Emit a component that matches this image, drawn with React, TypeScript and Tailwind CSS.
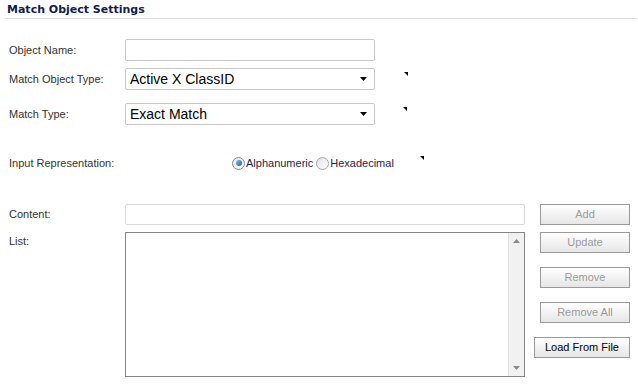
import React from "react";

const Corner = ({ className = "" }: { className?: string }) => (
  <svg width="4" height="4" viewBox="0 0 4 4" className={className}>
    <polygon points="0,0 4,0 4,4" fill="#000" />
  </svg>
);

const Select = ({ value }: { value: string }) => (
  <div className="w-[250px] h-[22px] border border-[#c9c9c9] rounded-[2px] bg-white flex items-center pl-[4px] pr-[7px] justify-between">
    <span className="text-[14px] text-black leading-none" style={{ fontFamily: "'Liberation Sans', Arial, sans-serif" }}>{value}</span>
    <svg width="7" height="4" viewBox="0 0 7 4"><polygon points="0,0 7,0 3.5,4" fill="#000" /></svg>
  </div>
);

const Btn = ({ label, disabled = true, w = "w-[90px]" }: { label: string; disabled?: boolean; w?: string }) => (
  <div className={`${w} h-[21px] border border-[#9a9a9a] bg-gradient-to-b from-white to-[#e6e6e6] flex items-center justify-center text-[11px] ${disabled ? "text-[#9b9b9b]" : "text-black"}`}>
    {label}
  </div>
);

export default function App() {
  return (
    <div className="w-[638px] h-[387px] bg-white text-[#333] text-[11px] overflow-hidden" style={{ fontFamily: "'Liberation Sans', Tahoma, sans-serif" }}>
      <div className="ml-[5px] mr-[1px] h-[19px] border-b border-[#dedede] pl-[2px] flex items-end pb-[3px]">
        <span className="text-[11px] leading-[11px] font-bold text-[#141a4c]" style={{ fontFamily: "'DejaVu Sans', Verdana, sans-serif" }}>Match Object Settings</span>
      </div>

      <div className="pl-[9px] mt-[20px] flex items-center h-[22px]">
        <div className="w-[116px]">Object Name:</div>
        <div className="w-[250px] h-[22px] border border-[#c9c9c9] rounded-[2px]"></div>
      </div>

      <div className="pl-[9px] mt-[7px] flex items-center h-[22px]">
        <div className="w-[116px]">Match Object Type:</div>
        <Select value="Active X ClassID" />
        <Corner className="ml-[29px] self-start mt-[4px]" />
      </div>

      <div className="pl-[9px] mt-[13px] flex items-center h-[22px]">
        <div className="w-[116px]">Match Type:</div>
        <Select value="Exact Match" />
        <Corner className="ml-[28px] self-start mt-[4px]" />
      </div>

      <div className="pl-[9px] mt-[30px] flex items-center h-[16px]">
        <div className="w-[223px]">Input Representation:</div>
        <div className="w-[13px] h-[13px] rounded-full border border-[#7f8a99] bg-gradient-to-br from-[#e4e8ee] to-white flex items-center justify-center">
          <div className="w-[6px] h-[6px] rounded-full bg-gradient-to-br from-[#7fc3f2] to-[#1c5fa8]"></div>
        </div>
        <span className="ml-[1px] text-[#1e2448]">Alphanumeric</span>
        <div className="ml-[3px] w-[13px] h-[13px] rounded-full border border-[#a0a6ae] bg-gradient-to-br from-[#dfe2e6] to-white"></div>
        <span className="ml-[1px] text-[#1e2448]">Hexadecimal</span>
        <Corner className="ml-[26px] self-start mt-[1px]" />
      </div>

      <div className="pl-[9px] mt-[33px] flex">
        <div className="w-[116px] flex flex-col">
          <div className="h-[21px] flex items-center">Content:</div>
          <div className="mt-[7px] pt-[1px]">List:</div>
        </div>
        <div className="w-[400px] flex flex-col">
          <div className="h-[21px] border border-[#d9d9d9] rounded-[2px]"></div>
          <div className="mt-[7px] h-[145px] border border-[#858585] flex justify-end">
            <div className="w-[16px] h-full bg-[#f1f1f1] border-l border-[#e2e2e2] flex flex-col items-center justify-between py-[6px]">
              <svg width="7" height="4" viewBox="0 0 7 4"><polygon points="0,4 7,4 3.5,0" fill="#8a8a8a" /></svg>
              <svg width="7" height="4" viewBox="0 0 7 4"><polygon points="0,0 7,0 3.5,4" fill="#8a8a8a" /></svg>
            </div>
          </div>
        </div>
        <div className="w-[105px] flex flex-col items-end">
          <Btn label="Add" />
          <div className="mt-[7px]"><Btn label="Update" /></div>
          <div className="mt-[14px]"><Btn label="Remove" /></div>
          <div className="mt-[14px]"><Btn label="Remove All" /></div>
          <div className="mt-[14px]"><Btn label="Load From File" disabled={false} w="w-[96px]" /></div>
        </div>
      </div>
    </div>
  );
}
